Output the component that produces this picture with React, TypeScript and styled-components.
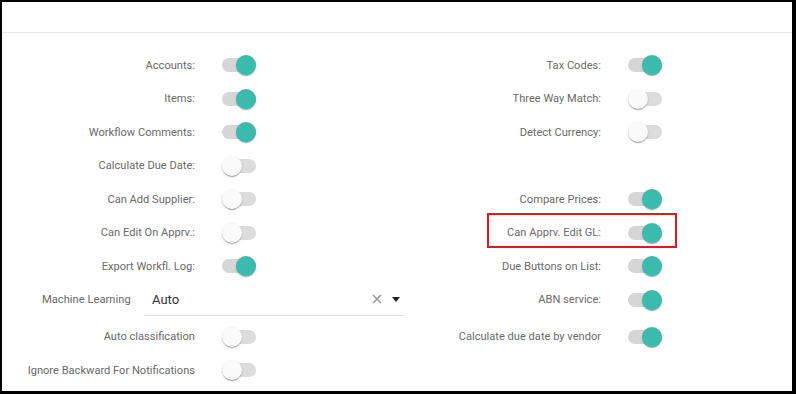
import React from "react";
import styled, { createGlobalStyle } from "styled-components";

const Global = createGlobalStyle`
  html, body { margin: 0; padding: 0; background: #fff; }
  body { font-family: Roboto, "Noto Sans", Arial, sans-serif; }
  * { box-sizing: border-box; }
`;

const Frame = styled.div`
  width: 796px;
  height: 394px;
  border-style: solid;
  border-color: #000;
  border-width: 2px 4px 3px 2px;
  background: #fff;
  overflow: hidden;
`;

const Header = styled.div`
  height: 31px;
  border-bottom: 1px solid #e3e7ee;
`;

const Body = styled.div`
  padding-top: 15.25px;
  display: grid;
  grid-template-columns: 404px 1fr;
  grid-auto-rows: minmax(33.5px, auto);
  align-items: start;
`;

const Cell = styled.div<{ $labelWidth: number }>`
  position: relative;
  height: 33.5px;
  display: grid;
  grid-template-columns: ${(p) => p.$labelWidth}px 34px;
  column-gap: 27px;
  align-items: center;
`;

const Empty = styled.div``;

const Label = styled.span`
  text-align: right;
  font-size: 11.1px;
  color: #6a6a6a;
  white-space: nowrap;
`;

const Track = styled.span<{ $on: boolean }>`
  position: relative;
  display: block;
  width: 34px;
  height: 14px;
  border-radius: 7px;
  background: ${(p) => (p.$on ? "#d6d6d6" : "#dcdcdc")};
`;

const Knob = styled.span<{ $on: boolean }>`
  position: absolute;
  top: -3px;
  left: ${(p) => (p.$on ? "14px" : "0px")};
  width: 20px;
  height: 20px;
  border-radius: 50%;
  background: ${(p) => (p.$on ? "#3bbbae" : "#fafafa")};
  box-shadow: 0 2px 1px -1px rgba(0, 0, 0, 0.2), 0 1px 1px 0 rgba(0, 0, 0, 0.14),
    0 1px 3px 0 rgba(0, 0, 0, 0.12);
`;

const Highlight = styled.div`
  position: absolute;
  left: 81px;
  top: -2.75px;
  width: 190px;
  height: 35px;
  border: 2px solid #e3171c;
  pointer-events: none;
`;

const SelectRow = styled.div`
  height: 37px;
  display: flex;
  align-items: flex-start;
  padding-left: 40px;
`;

const SelectLabel = styled.span`
  font-size: 11.2px;
  color: #6a6a6a;
  line-height: 33px;
  width: 102px;
  white-space: nowrap;
`;

const SelectBox = styled.div`
  width: 261px;
  height: 33px;
  border-bottom: 1px solid #e2e2e2;
  display: flex;
  align-items: center;
  padding-left: 8px;
  padding-right: 5px;
  padding-top: 1px;
`;

const SelectValue = styled.span`
  flex: 1;
  font-size: 13px;
  color: #333;
`;

const IconWrap = styled.span`
  display: flex;
  align-items: center;
  gap: 10px;
`;

const Switch = ({ on }: { on: boolean }) => (
  <Track $on={on}>
    <Knob $on={on} />
  </Track>
);

type Item = { label: string; on: boolean; highlight?: boolean } | null;

const Field = ({ item, labelWidth }: { item: Item; labelWidth: number }) => {
  if (!item) return <Empty />;
  return (
    <Cell $labelWidth={labelWidth}>
      <Label>{item.label}</Label>
      <Switch on={item.on} />
      {item.highlight && <Highlight />}
    </Cell>
  );
};

const left: (Item | "select")[] = [
  { label: "Accounts:", on: true },
  { label: "Items:", on: true },
  { label: "Workflow Comments:", on: true },
  { label: "Calculate Due Date:", on: false },
  { label: "Can Add Supplier:", on: false },
  { label: "Can Edit On Apprv.:", on: false },
  { label: "Export Workfl. Log:", on: true },
  "select",
  { label: "Auto classification", on: false },
  { label: "Ignore Backward For Notifications", on: false },
];

const right: Item[] = [
  { label: "Tax Codes:", on: true },
  { label: "Three Way Match:", on: false },
  { label: "Detect Currency:", on: false },
  null,
  { label: "Compare Prices:", on: true },
  { label: "Can Apprv. Edit GL:", on: true, highlight: true },
  { label: "Due Buttons on List:", on: true },
  { label: "ABN service:", on: true },
  { label: "Calculate due date by vendor", on: true },
  null,
];

export default function App() {
  return (
    <>
      <Global />
      <Frame>
        <Header />
        <Body>
          {left.map((l, i) => (
            <React.Fragment key={i}>
              {l === "select" ? (
                <SelectRow>
                  <SelectLabel>Machine Learning</SelectLabel>
                  <SelectBox>
                    <SelectValue>Auto</SelectValue>
                    <IconWrap>
                      <svg width="10" height="10" viewBox="0 0 10 10">
                        <path d="M1 1 L9 9 M9 1 L1 9" stroke="#9a9a9a" strokeWidth="1.6" />
                      </svg>
                      <svg width="8" height="5" viewBox="0 0 8 5">
                        <path d="M0 0 H8 L4 5 Z" fill="#222" />
                      </svg>
                    </IconWrap>
                  </SelectBox>
                </SelectRow>
              ) : (
                <Field item={l} labelWidth={193} />
              )}
              <Field item={right[i]} labelWidth={195} />
            </React.Fragment>
          ))}
        </Body>
      </Frame>
    </>
  );
}
